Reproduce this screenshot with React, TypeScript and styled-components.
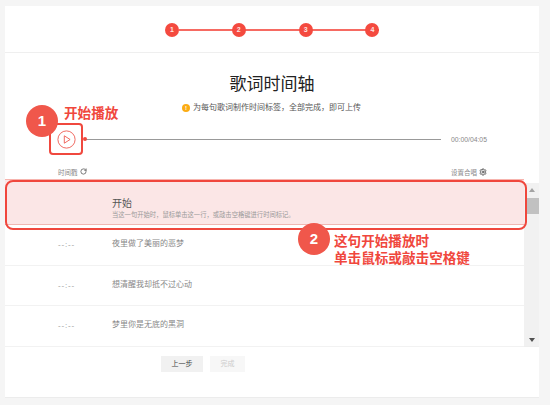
import styled, { createGlobalStyle } from "styled-components";
import { RotateCw, Settings } from "lucide-react";

const steps = [1, 2, 3, 4];
const lyrics = ["夜里做了美丽的恶梦", "想清醒我却抵不过心动", "梦里你是无底的黑洞"];

export default function App() {
  return (
    <>
      <GlobalStyle />
      <Card>
        <Stepper>
          {steps.map((s) => (
            <Step key={s} $first={s === 1}>
              <StepDot>{s}</StepDot>
            </Step>
          ))}
        </Stepper>
        <Title>歌词时间轴</Title>
        <Tip>
          <TipIcon>!</TipIcon>
          为每句歌词制作时间标签，全部完成，即可上传
        </Tip>
        <Player>
          <PlayBox>
            <svg width="19" height="19" viewBox="0 0 19 19" fill="none" stroke="#ee5a50" strokeWidth="0.9">
              <circle cx="9.5" cy="9.5" r="8.6" />
              <path d="M7.3 5.8v7.4l5.8-3.7z" strokeLinejoin="round" />
            </svg>
          </PlayBox>
          <Track />
          <TimeText>00:00/04:05</TimeText>
        </Player>
        <ListHead>
          <HeadLabel>
            时间戳
            <RotateCw size={7} color="#555" strokeWidth={2.6} />
          </HeadLabel>
          <HeadLabel>
            设置合唱
            <Settings size={8} color="#555" strokeWidth={2.8} />
          </HeadLabel>
        </ListHead>
        <ListArea>
          <Rows>
            <ActiveRow>
              <ActiveTitle>开始</ActiveTitle>
              <ActiveHint>当这一句开始时，鼠标单击这一行，或敲击空格键进行时间标记。</ActiveHint>
            </ActiveRow>
            {lyrics.map((text) => (
              <Row key={text}>
                <RowTime>--:--</RowTime>
                <RowText>{text}</RowText>
              </Row>
            ))}
          </Rows>
          <Scrollbar>
            <ArrowUp />
            <Thumb />
            <ArrowDown />
          </Scrollbar>
        </ListArea>
        <Footer>
          <PrevButton>上一步</PrevButton>
          <DoneButton>完成</DoneButton>
        </Footer>

        <CircleOne>1</CircleOne>
        <LabelOne>开始播放</LabelOne>
        <RowOutline />
        <CircleTwo>2</CircleTwo>
        <LabelTwo>
          这句开始播放时
          <br />
          单击鼠标或敲击空格键
        </LabelTwo>
      </Card>
    </>
  );
}

const GlobalStyle = createGlobalStyle`
  html, body {
    margin: 0;
    padding: 0;
    background: #f5f5f5;
  }
  body {
    font-family: "Liberation Sans", "Noto Sans CJK SC", sans-serif;
  }
`;

const Card = styled.div`
  position: relative;
  box-sizing: border-box;
  width: 534px;
  height: 392px;
  margin: 6px 0 0 5px;
  background: #fff;
  border-bottom: 1px solid #ececec;
`;

const Stepper = styled.div`
  box-sizing: border-box;
  height: 47px;
  padding: 17px 0 0 160px;
  display: flex;
  align-items: flex-start;
  border-bottom: 1px solid #efefef;
`;

const Step = styled.div<{ $first: boolean }>`
  display: flex;
  justify-content: flex-end;
  width: ${(p) => (p.$first ? "14px" : "66.8px")};
  height: 14px;
  background: ${(p) =>
    p.$first ? "none" : "linear-gradient(#f66a62, #f66a62) center / 100% 2px no-repeat"};
`;

const StepDot = styled.div`
  width: 14px;
  height: 14px;
  border-radius: 50%;
  background: #f44a3f;
  color: #ffe3e0;
  font-size: 7px;
  font-weight: 700;
  line-height: 14px;
  text-align: center;
`;

const Title = styled.h1`
  margin: 20px 0 0;
  font-size: 17px;
  font-weight: 400;
  line-height: 24px;
  color: #222;
  text-align: center;
`;

const Tip = styled.div`
  display: flex;
  align-items: center;
  justify-content: center;
  gap: 3px;
  margin-top: 5px;
  padding-right: 1px;
  font-size: 8px;
  line-height: 12px;
  color: #555;
`;

const TipIcon = styled.span`
  width: 8px;
  height: 8px;
  border-radius: 50%;
  background: #fbac14;
  color: #fff;
  font-size: 6px;
  font-weight: 700;
  line-height: 8px;
  text-align: center;
`;

const Player = styled.div`
  display: flex;
  align-items: center;
  margin-top: 9px;
  padding-left: 44px;
  height: 32px;
`;

const PlayBox = styled.div`
  box-sizing: border-box;
  display: flex;
  align-items: center;
  justify-content: center;
  width: 34px;
  height: 32px;
  border: 2px solid #f0483e;
  border-radius: 4px;
  background: #fff;
`;

const Track = styled.div`
  position: relative;
  width: 355px;
  height: 1px;
  margin-left: 3px;
  background: #999;
  &::before {
    content: "";
    position: absolute;
    left: -3px;
    top: -1.5px;
    width: 4px;
    height: 4px;
    border-radius: 50%;
    background: #f0483e;
  }
`;

const TimeText = styled.span`
  margin-left: 10px;
  font-size: 6.8px;
  color: #888;
`;

const ListHead = styled.div`
  display: flex;
  justify-content: space-between;
  margin-top: 9px;
  padding: 0 52px 0 53px;
  height: 15px;
  align-items: center;
`;

const HeadLabel = styled.span`
  display: flex;
  align-items: center;
  gap: 2px;
  font-size: 6.5px;
  color: #888;
`;

const ListArea = styled.div`
  display: flex;
  height: 167px;
  border-bottom: 1px solid #eee;
`;

const Rows = styled.div`
  flex: 1;
  min-width: 0;
`;

const ActiveRow = styled.div`
  box-sizing: border-box;
  height: 46px;
  padding: 17px 0 0 107px;
  background: #fbe6e6;
  border-top: 1px solid #f7b4ae;
  border-bottom: 1px solid #f0b7b2;
`;

const ActiveTitle = styled.div`
  font-size: 10px;
  line-height: 13px;
  color: #555;
`;

const ActiveHint = styled.div`
  font-size: 6.3px;
  line-height: 9px;
  color: #999;
`;

const Row = styled.div`
  box-sizing: border-box;
  height: 40.5px;
  display: flex;
  padding: 13px 0 0 53px;
  border-bottom: 1.5px solid #f2f2f2;
`;

const RowTime = styled.span`
  width: 54px;
  margin-top: 1px;
  font-size: 8px;
  letter-spacing: 0.8px;
  line-height: 12px;
  color: #999;
`;

const RowText = styled.span`
  font-size: 8px;
  line-height: 12px;
  color: #888;
`;

const Scrollbar = styled.div`
  display: flex;
  flex-direction: column;
  align-items: flex-end;
  width: 15px;
  margin-top: 4px;
  padding: 5px 0 4px;
  box-sizing: border-box;
  background: #f1f1f1;
`;

const ArrowUp = styled.div`
  width: 0;
  height: 0;
  margin-right: 4px;
  border-left: 3.5px solid transparent;
  border-right: 3.5px solid transparent;
  border-bottom: 4px solid #a3a3a3;
`;

const Thumb = styled.div`
  width: 13px;
  height: 16px;
  margin-top: 6px;
  background: #c1c1c1;
`;

const ArrowDown = styled.div`
  width: 0;
  height: 0;
  margin: auto 4px 0 0;
  border-left: 3.5px solid transparent;
  border-right: 3.5px solid transparent;
  border-top: 4px solid #505050;
`;

const Footer = styled.div`
  display: flex;
  justify-content: flex-start;
  gap: 7px;
  padding: 9px 0 0 156px;
`;

const PrevButton = styled.div`
  width: 42px;
  height: 16px;
  background: #f1f1f1;
  color: #444;
  font-size: 7px;
  line-height: 16px;
  text-align: center;
`;

const DoneButton = styled(PrevButton)`
  width: 35px;
  background: #f7f7f7;
  color: #ccc;
`;

const CircleOne = styled.div`
  position: absolute;
  left: 21px;
  top: 99px;
  width: 32px;
  height: 32px;
  border-radius: 50%;
  background: #f0574b;
  color: #fff;
  font-size: 15px;
  font-weight: 700;
  line-height: 32px;
  text-align: center;
`;

const LabelOne = styled.div`
  position: absolute;
  left: 59px;
  top: 99px;
  font-size: 13.6px;
  font-weight: 700;
  line-height: 18px;
  color: #f0473d;
`;

const RowOutline = styled.div`
  position: absolute;
  box-sizing: border-box;
  left: 0;
  top: 174px;
  width: 522px;
  height: 50px;
  border: 2px solid #f0473d;
  border-radius: 8px;
`;

const CircleTwo = styled(CircleOne)`
  left: 293px;
  top: 217px;
`;

const LabelTwo = styled.div`
  position: absolute;
  left: 329px;
  top: 227px;
  font-size: 13.6px;
  font-weight: 700;
  line-height: 17px;
  color: #f0473d;
`;
